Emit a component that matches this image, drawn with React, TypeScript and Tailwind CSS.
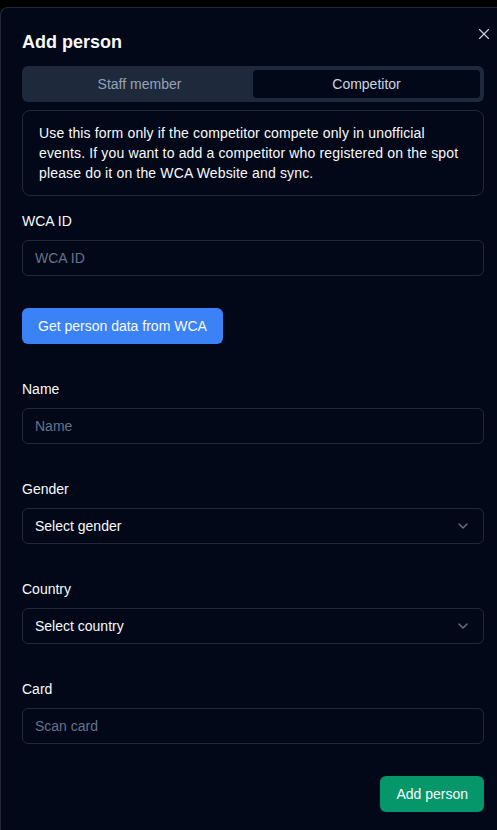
import React, { useState } from 'react';
import { X, ChevronDown } from 'lucide-react';

const Field = ({ label, children }: { label: string; children: React.ReactNode }) => (
  <div>
    <label className="block text-sm leading-5 text-[#f8fafc] mb-[9px]">{label}</label>
    {children}
  </div>
);

const TextInput = ({ placeholder }: { placeholder: string }) => (
  <input
    type="text"
    placeholder={placeholder}
    className="w-full h-9 px-3 rounded-md border border-[#1e293b] bg-transparent text-sm text-[#f8fafc] placeholder:text-[#64748b] outline-none"
  />
);

const SelectBox = ({ text }: { text: string }) => (
  <button
    type="button"
    className="w-full h-9 px-3 rounded-md border border-[#1e293b] bg-transparent text-sm text-[#f8fafc] flex items-center justify-between"
  >
    <span>{text}</span>
    <ChevronDown className="h-4 w-4 text-[#94a3b8] opacity-70" />
  </button>
);

const App = () => {
  const [tab, setTab] = useState('competitor');
  return <div className="min-h-screen bg-black pt-[7px]" style={{ fontFamily: '"Liberation Sans", sans-serif' }}>
      <div className="relative min-h-[823px] bg-[#020817] border-t border-l border-[#1e293b] rounded-tl-lg pl-[21px] pr-[13px] pt-[20px] pb-[18px]">
        <button className="absolute right-[4px] top-[17px] text-[#cbd5e1]">
          <X size={18} strokeWidth={1.5} />
        </button>
        <h2 className="text-lg leading-7 font-bold text-[#f8fafc]">Add person</h2>
        <div className="mt-[10px] h-9 rounded-md bg-[#1e293b] p-1 grid grid-cols-2">
          <button onClick={() => setTab('staff')} className={`rounded-sm text-sm ${tab === 'staff' ? 'bg-[#020817] text-[#cbd5e1]' : 'text-[#94a3b8]'}`}>
            Staff member
          </button>
          <button onClick={() => setTab('competitor')} className={`rounded-sm text-sm ${tab === 'competitor' ? 'bg-[#020817] text-[#cbd5e1]' : 'text-[#94a3b8]'}`}>
            Competitor
          </button>
        </div>
        <div className="mt-[8px] rounded-lg border border-[#1e293b] px-4 py-3 text-sm leading-5 tracking-[0.15px] text-[#f8fafc]">
          Use this form only if the competitor compete only in unofficial events. If you want to add a competitor who registered on the spot please do it on the WCA Website and sync.
        </div>
        <div className="mt-[15px]">
          <Field label="WCA ID">
            <TextInput placeholder="WCA ID" />
          </Field>
        </div>
        <button className="mt-8 h-9 px-4 rounded-md bg-[#3b82f6] text-sm text-[#f8fafc]">
          Get person data from WCA
        </button>
        <div className="mt-[35px] flex flex-col gap-[35px]">
          <Field label="Name">
            <TextInput placeholder="Name" />
          </Field>
          <Field label="Gender">
            <SelectBox text="Select gender" />
          </Field>
          <Field label="Country">
            <SelectBox text="Select country" />
          </Field>
          <Field label="Card">
            <TextInput placeholder="Scan card" />
          </Field>
        </div>
        <div className="mt-8 flex justify-end">
          <button className="h-9 px-4 rounded-md bg-[#059669] text-sm text-[#f8fafc]">Add person</button>
        </div>
      </div>
    </div>;
};
export default App;
